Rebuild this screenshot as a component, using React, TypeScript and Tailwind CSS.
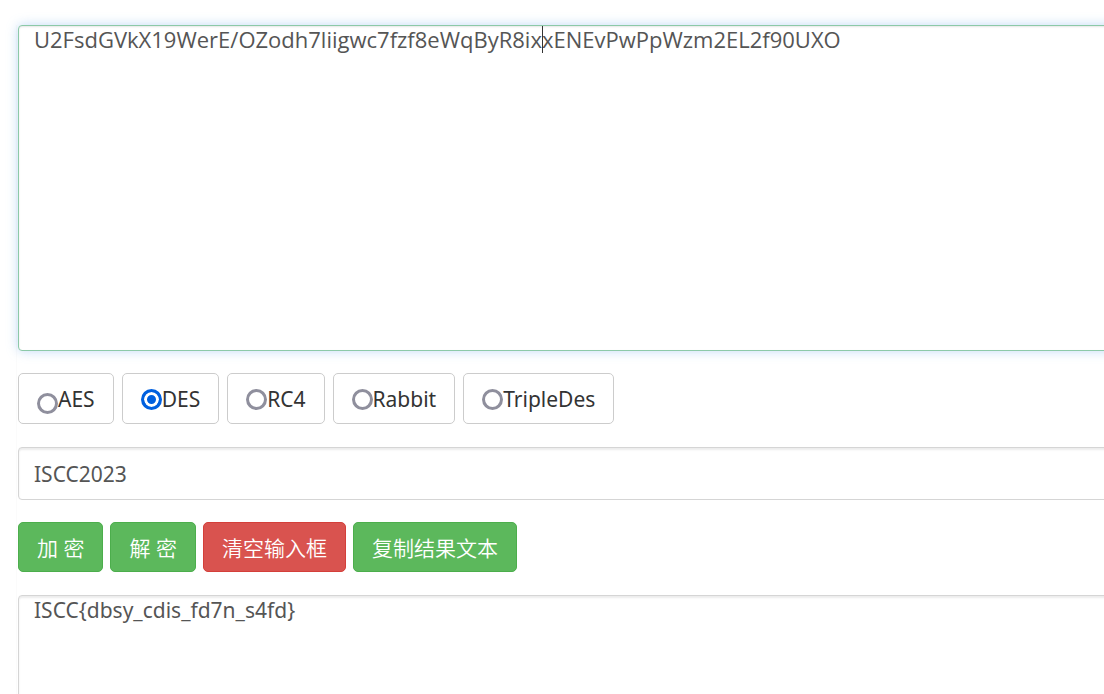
import { useState } from "react";

const ALGORITHMS = ["AES", "DES", "RC4", "Rabbit", "TripleDes"];

const field =
  "block w-full resize-none rounded border bg-white px-[15px] text-[#555] outline-none";

const button =
  "h-[50px] rounded-[5px] border px-[18px] pt-px text-[21px] leading-[30px] font-[350] text-white whitespace-nowrap";
const green = "border-[#4cae4c] bg-[#5cb85c]";
const red = "border-[#d43f3a] bg-[#d9534f]";

export default function App() {
  const [algorithm, setAlgorithm] = useState("DES");
  const [source, setSource] = useState("U2FsdGVkX19WerE/OZodh7liigwc7fzf8eWqByR8ixxENEvPwPpWzm2EL2f90UXO");
  const [secret, setSecret] = useState("ISCC2023");

  return (
    <main className="h-screen overflow-hidden bg-white pt-[25px] pl-4 font-['Noto_Sans','Noto_Sans_CJK_SC',sans-serif]">
      <div className="-mr-4 flex flex-col border-l border-[#fbfbfb] pl-px">
        <div className="relative">
          <textarea
            aria-label="Source text"
            value={source}
            onChange={(e) => setSource(e.target.value)}
            className={`${field} h-[326px] border-[#8cc9a8] font-['Open_Sans',sans-serif] text-[22px] leading-[26px] caret-transparent shadow-[inset_0_1px_2px_rgba(0,0,0,0.1),0_0_12px_rgba(102,165,233,0.4)]`}
          />
          <span className="absolute top-px left-[524px] h-[27px] w-px bg-[#333]" />
        </div>

        <div className="mt-[22px] flex gap-2">
          {ALGORITHMS.map((name) => (
            <label
              key={name}
              className="flex h-[51px] items-center rounded-[5px] border border-[#ccc] bg-white px-[18px] text-[21px] leading-[30px] text-[#333]"
            >
              <input
                type="radio"
                name="algorithm"
                checked={algorithm === name}
                onChange={() => setAlgorithm(name)}
                className="mt-0.5 size-[21px] shrink-0 appearance-none rounded-full border-[3px] border-[#8f8f9d] bg-white checked:border-[#0060df] checked:bg-[#0060df] checked:shadow-[inset_0_0_0_3px_white] in-[label:first-child]:mt-2.5"
              />
              {name}
            </label>
          ))}
        </div>

        <input
          type="text"
          aria-label="Password"
          value={secret}
          onChange={(e) => setSecret(e.target.value)}
          className={`${field} mt-[23px] h-[53px] border-[#d5d5d5] text-[21px] shadow-[inset_0_2px_2px_rgba(0,0,0,0.08)]`}
        />

        <div className="mt-[22px] flex gap-[7px]">
          <button type="button" className={`${button} ${green}`}>加 密</button>
          <button type="button" className={`${button} ${green}`}>解 密</button>
          <button type="button" className={`${button} ${red}`}>清空输入框</button>
          <button type="button" className={`${button} ${green}`}>复制结果文本</button>
        </div>

        <textarea
          aria-label="Result"
          readOnly
          value="ISCC{dbsy_cdis_fd7n_s4fd}"
          className={`${field} mt-[23px] h-[326px] border-[#d5d5d5] text-[21px] leading-[28px] shadow-[inset_0_2px_2px_rgba(0,0,0,0.08)]`}
        />
      </div>
    </main>
  );
}
